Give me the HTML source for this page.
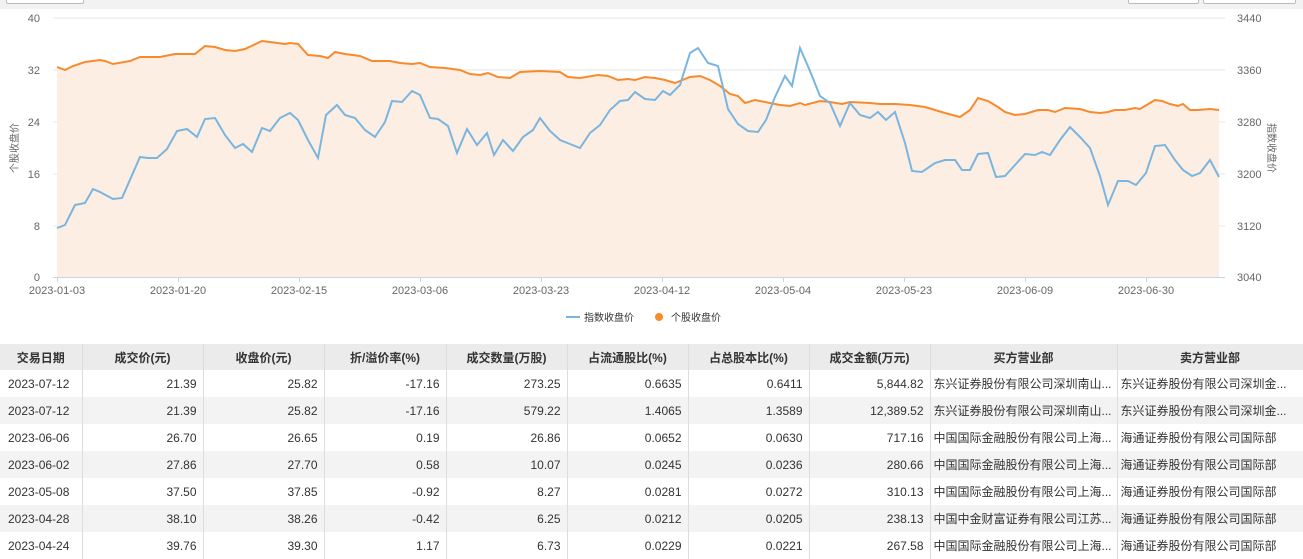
<!DOCTYPE html>
<html><head><meta charset="utf-8"><style>
*{margin:0;padding:0;box-sizing:border-box}
body{width:1303px;height:556px;overflow:hidden;background:#fff;font-family:"Liberation Sans","Noto Sans CJK SC",sans-serif;font-size:12px;color:#333;position:relative}
.top{position:absolute;left:0;top:0;width:1303px;height:9px;background:#f2f2f2}
.btn{position:absolute;top:-2px;height:6px;border:1px solid #bbb;background:#fff;border-radius:2px}
table{position:absolute;left:0;top:344px;border-collapse:collapse;table-layout:fixed;width:1303px}
td,th{height:27px;border-right:1px solid #ddd;padding:0 6px;white-space:nowrap;overflow:hidden;text-overflow:ellipsis;font-size:12px}
th{background:#ebebeb;font-weight:bold;color:#333;height:26px;text-align:center;border-right:1px solid #ddd}
td{text-align:right}
td:first-child{text-align:left;padding-left:8px}
td.l{text-align:left;padding-left:3px;padding-right:2px}
tr:nth-child(odd) td{background:#f3f3f3}
</style></head><body>
<div class="top"></div>
<div class="btn" style="left:6px;width:78px"></div>
<div class="btn" style="left:1128px;width:71px"></div>
<div class="btn" style="left:1203px;width:93px"></div>
<svg width="1303" height="340" style="position:absolute;left:0;top:0" font-family="Liberation Sans, Noto Sans CJK SC, sans-serif" font-size="11" fill="#666">
<g stroke="#e6e6e6" stroke-width="1">
<line x1="53" y1="18" x2="1225" y2="18"/><line x1="53" y1="70" x2="1225" y2="70"/><line x1="53" y1="122" x2="1225" y2="122"/><line x1="53" y1="174" x2="1225" y2="174"/><line x1="53" y1="226" x2="1225" y2="226"/>
</g>
<polygon fill="#fdeee3" points="57,277 57,67 65,70 73,66 85,62 100,60 105,61 113,64 130,61 140,57 160,57 175,54 195,54 205,46 215,47 225,50 235,51 245,49 262,41 270,42 285,44 290,43 298,44 308,55 320,56 328,58 335,52 345,54 360,56 372,61 390,61 400,63 412,64 420,63 430,67 445,68 460,70 470,74 480,75 488,73 498,77 510,78 520,72 540,71 560,72 568,77 580,78 598,75 608,76 618,80 628,79 635,80 645,77 655,78 665,80 675,83 690,77 700,76 710,80 720,86 730,94 738,96 745,103 755,100 770,103 780,105 790,106 800,103 805,105 820,101 830,102 842,104 850,102 870,103 880,104 895,104 910,105 925,107 935,110 945,113 960,117 970,110 978,98 988,101 998,107 1005,112 1015,115 1025,114 1038,110 1048,110 1055,112 1065,108 1080,109 1090,112 1100,113 1108,112 1115,110 1125,110 1135,108 1140,109 1150,103 1155,100 1162,101 1170,104 1178,106 1183,104 1190,110 1198,110 1210,109 1219,110 1219,277"/>
<line x1="53" y1="277.5" x2="1225" y2="277.5" stroke="#c8d3e6"/>
<g stroke="#c8d3e6"><line x1="57.5" y1="277" x2="57.5" y2="282"/><line x1="178.5" y1="277" x2="178.5" y2="282"/><line x1="299.5" y1="277" x2="299.5" y2="282"/><line x1="420.5" y1="277" x2="420.5" y2="282"/><line x1="541.5" y1="277" x2="541.5" y2="282"/><line x1="662.5" y1="277" x2="662.5" y2="282"/><line x1="783.5" y1="277" x2="783.5" y2="282"/><line x1="904.5" y1="277" x2="904.5" y2="282"/><line x1="1025.5" y1="277" x2="1025.5" y2="282"/><line x1="1146.5" y1="277" x2="1146.5" y2="282"/></g>
<polyline fill="none" stroke="#f98a2c" stroke-width="2" points="57,67 65,70 73,66 85,62 100,60 105,61 113,64 130,61 140,57 160,57 175,54 195,54 205,46 215,47 225,50 235,51 245,49 262,41 270,42 285,44 290,43 298,44 308,55 320,56 328,58 335,52 345,54 360,56 372,61 390,61 400,63 412,64 420,63 430,67 445,68 460,70 470,74 480,75 488,73 498,77 510,78 520,72 540,71 560,72 568,77 580,78 598,75 608,76 618,80 628,79 635,80 645,77 655,78 665,80 675,83 690,77 700,76 710,80 720,86 730,94 738,96 745,103 755,100 770,103 780,105 790,106 800,103 805,105 820,101 830,102 842,104 850,102 870,103 880,104 895,104 910,105 925,107 935,110 945,113 960,117 970,110 978,98 988,101 998,107 1005,112 1015,115 1025,114 1038,110 1048,110 1055,112 1065,108 1080,109 1090,112 1100,113 1108,112 1115,110 1125,110 1135,108 1140,109 1150,103 1155,100 1162,101 1170,104 1178,106 1183,104 1190,110 1198,110 1210,109 1219,110"/>
<polyline fill="none" stroke="#7ab5e0" stroke-width="2" points="57,228 65,225 75,205 85,203 93,189 100,192 113,199 122,198 140,157 148,158 157,158 167,149 177,131 187,129 197,137 205,119 215,118 225,135 235,148 243,144 252,152 262,128 270,131 280,118 290,113 298,120 308,140 318,158 326,115 337,105 345,115 355,118 365,130 375,137 385,122 392,101 402,102 412,91 420,95 430,118 438,119 448,126 457,153 467,129 477,145 487,133 494,155 503,140 513,151 523,137 533,130 540,118 550,131 560,140 570,144 580,148 590,133 600,125 610,110 620,101 628,100 635,92 645,99 655,100 663,91 670,95 680,85 690,53 698,48 708,63 718,66 728,109 738,124 748,131 758,132 766,120 775,97 785,76 792,86 800,48 810,71 820,96 830,103 840,126 850,103 860,115 870,118 878,112 886,120 895,112 905,143 912,171 922,172 935,163 945,160 955,160 962,170 970,170 978,154 988,153 996,177 1005,176 1015,165 1025,154 1035,155 1042,152 1050,155 1060,140 1070,127 1080,137 1090,148 1100,176 1108,205 1118,181 1128,181 1136,185 1146,173 1155,146 1165,145 1175,160 1183,170 1192,176 1200,173 1210,160 1219,177"/>
<g text-anchor="end"><text x="40" y="22">40</text><text x="40" y="74">32</text><text x="40" y="126">24</text><text x="40" y="178">16</text><text x="40" y="230">8</text><text x="40" y="281">0</text></g>
<g><text x="1237" y="22">3440</text><text x="1237" y="74">3360</text><text x="1237" y="126">3280</text><text x="1237" y="178">3200</text><text x="1237" y="230">3120</text><text x="1237" y="281">3040</text></g>
<g text-anchor="middle"><text x="57" y="294">2023-01-03</text><text x="178" y="294">2023-01-20</text><text x="299" y="294">2023-02-15</text><text x="420" y="294">2023-03-06</text><text x="541" y="294">2023-03-23</text><text x="662" y="294">2023-04-12</text><text x="783" y="294">2023-05-04</text><text x="904" y="294">2023-05-23</text><text x="1025" y="294">2023-06-09</text><text x="1146" y="294">2023-06-30</text></g>
<text transform="translate(18,148) rotate(-90)" text-anchor="middle" font-size="10">个股收盘价</text>
<text transform="translate(1268,148) rotate(90)" text-anchor="middle" font-size="10">指数收盘价</text>
<line x1="566" y1="317" x2="580" y2="317" stroke="#7ab5e0" stroke-width="2"/>
<text x="584" y="321" font-size="10" fill="#333">指数收盘价</text>
<circle cx="659" cy="317" r="4" fill="#f98a2c"/>
<text x="671" y="321" font-size="10" fill="#333">个股收盘价</text>
</svg>
<table>
<colgroup><col style="width:82px"><col style="width:121px"><col style="width:121px"><col style="width:122px"><col style="width:121px"><col style="width:121px"><col style="width:121px"><col style="width:121px"><col style="width:187px"><col style="width:186px"></colgroup>
<tr><th>交易日期</th><th>成交价(元)</th><th>收盘价(元)</th><th>折/溢价率(%)</th><th>成交数量(万股)</th><th>占流通股比(%)</th><th>占总股本比(%)</th><th>成交金额(万元)</th><th>买方营业部</th><th>卖方营业部</th></tr>
<tr><td>2023-07-12</td><td>21.39</td><td>25.82</td><td>-17.16</td><td>273.25</td><td>0.6635</td><td>0.6411</td><td>5,844.82</td><td class="l">东兴证券股份有限公司深圳南山...</td><td class="l">东兴证券股份有限公司深圳金...</td></tr>
<tr><td>2023-07-12</td><td>21.39</td><td>25.82</td><td>-17.16</td><td>579.22</td><td>1.4065</td><td>1.3589</td><td>12,389.52</td><td class="l">东兴证券股份有限公司深圳南山...</td><td class="l">东兴证券股份有限公司深圳金...</td></tr>
<tr><td>2023-06-06</td><td>26.70</td><td>26.65</td><td>0.19</td><td>26.86</td><td>0.0652</td><td>0.0630</td><td>717.16</td><td class="l">中国国际金融股份有限公司上海...</td><td class="l">海通证券股份有限公司国际部</td></tr>
<tr><td>2023-06-02</td><td>27.86</td><td>27.70</td><td>0.58</td><td>10.07</td><td>0.0245</td><td>0.0236</td><td>280.66</td><td class="l">中国国际金融股份有限公司上海...</td><td class="l">海通证券股份有限公司国际部</td></tr>
<tr><td>2023-05-08</td><td>37.50</td><td>37.85</td><td>-0.92</td><td>8.27</td><td>0.0281</td><td>0.0272</td><td>310.13</td><td class="l">中国国际金融股份有限公司上海...</td><td class="l">海通证券股份有限公司国际部</td></tr>
<tr><td>2023-04-28</td><td>38.10</td><td>38.26</td><td>-0.42</td><td>6.25</td><td>0.0212</td><td>0.0205</td><td>238.13</td><td class="l">中国中金财富证券有限公司江苏...</td><td class="l">海通证券股份有限公司国际部</td></tr>
<tr><td>2023-04-24</td><td>39.76</td><td>39.30</td><td>1.17</td><td>6.73</td><td>0.0229</td><td>0.0221</td><td>267.58</td><td class="l">中国国际金融股份有限公司上海...</td><td class="l">海通证券股份有限公司国际部</td></tr>
</table>
</body></html>
